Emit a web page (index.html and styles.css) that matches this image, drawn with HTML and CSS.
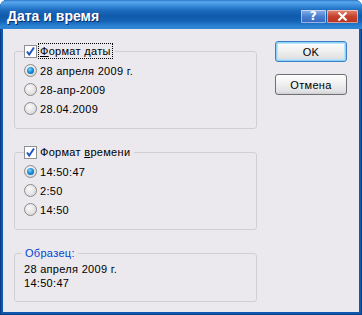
FILE: index.html
```html
<!DOCTYPE html>
<html>
<head>
<meta charset="utf-8">
<link rel="stylesheet" href="styles.css">
</head>
<body>
<div class="window">
  <div class="titlebar">
    <span class="title">Дата и время</span>
    <div class="tb-buttons">
      <div class="tb help">?</div>
      <div class="tb close">
        <svg width="11" height="9" viewBox="0 0 11 9"><path d="M1.5 0.5 L9.5 8.5 M9.5 0.5 L1.5 8.5" stroke="#fff" stroke-width="2.2" fill="none"/></svg>
      </div>
    </div>
  </div>
  <div class="client">
    <div class="left">
      <div class="group">
        <div class="legend">
          <span class="check"><svg width="13" height="13" viewBox="0 0 13 13"><rect x="0.5" y="0.5" width="12" height="12" fill="#fff" stroke="#8e8f8f"/><path d="M3 6.5 L5.2 9.5 L10 2.5" stroke="#2156c6" stroke-width="2" fill="none"/></svg></span>
          <span class="focus"><u>Ф</u>ормат даты</span>
        </div>
        <div class="rows">
          <div class="row"><span class="radio on"></span>28 апреля 2009 г.</div>
          <div class="row"><span class="radio"></span>28-апр-2009</div>
          <div class="row"><span class="radio"></span>28.04.2009</div>
        </div>
      </div>
      <div class="group g2">
        <div class="legend">
          <span class="check"><svg width="13" height="13" viewBox="0 0 13 13"><rect x="0.5" y="0.5" width="12" height="12" fill="#fff" stroke="#8e8f8f"/><path d="M3 6.5 L5.2 9.5 L10 2.5" stroke="#2156c6" stroke-width="2" fill="none"/></svg></span>
          <span class="lbl">Формат <u>в</u>ремени</span>
        </div>
        <div class="rows">
          <div class="row"><span class="radio on"></span>14:50:47</div>
          <div class="row"><span class="radio"></span>2:50</div>
          <div class="row"><span class="radio"></span>14:50</div>
        </div>
      </div>
      <div class="group g3">
        <div class="legend blue"><span class="lbl">Образец:</span></div>
        <div class="sample">
          <div>28 апреля 2009 г.</div>
          <div>14:50:47</div>
        </div>
      </div>
    </div>
    <div class="right">
      <div class="btn default">OK</div>
      <div class="btn">Отмена</div>
    </div>
  </div>
</div>
</body>
</html>
```
FILE: styles.css
```css
* { box-sizing: border-box; }
html, body { margin: 0; padding: 0; }
body {
  width: 362px;
  height: 315px;
  overflow: hidden;
  font-family: "Liberation Sans", Arial, sans-serif;
  font-size: 11px;
  letter-spacing: 0.3px;
  color: #000;
}
.window {
  width: 362px;
  height: 315px;
  display: flex;
  flex-direction: column;
  background: #1057b0;
  border-radius: 7px 7px 0 0;
  overflow: hidden;
  box-shadow: inset 1px 0 0 #0a3f86, inset -1px 0 0 #0a3f86, inset 0 -1px 0 #0a3f86;
}
.titlebar {
  height: 29px;
  flex: none;
  display: flex;
  align-items: center;
  padding: 2px 7px 0 7px;
  background: linear-gradient(to bottom, #2a78cc 0px, #5aa8ea 2px, #3f92df 5px, #1e6dc0 10px, #105aab 16px, #1462b5 21px, #2a82d2 26px, #2d85d4 29px);
}
.title {
  flex: 1;
  color: #fff;
  font-family: "Liberation Sans", sans-serif;
  font-weight: bold;
  font-size: 14px;
  letter-spacing: 0;
  text-shadow: 1px 1px 0 #0b2f6a;
}
.tb-buttons {
  display: flex;
  gap: 1px;
  margin-right: -3px;
  margin-top: 1px;
}
.tb {
  height: 13px;
  display: flex;
  align-items: center;
  justify-content: center;
  color: #fff;
  font-weight: bold;
  font-size: 12px;
  border-radius: 1px;
  box-shadow: inset 0 0 0 1px rgba(255,255,255,0.5);
}
.help {
  width: 25px;
  background: linear-gradient(to bottom, #8cb2e6, #4a7fd0 50%, #3466c0);
  font-family: "DejaVu Sans", sans-serif;
}
.close {
  width: 31px;
  background: linear-gradient(to bottom, #e28a74, #c7402b 50%, #b53523);
}
.client {
  flex: 1;
  margin: 0 3px 3px 3px;
  background: #ebe9ed;
  display: flex;
  align-items: flex-start;
  padding: 0 0 0 11px;
}
.left {
  width: 243px;
  flex: none;
  padding-top: 22px;
}
.group {
  border: 1px solid #d0d0d3;
  border-radius: 3px;
  padding: 0 0 10px 9px;
}
.g2 { margin-top: 23px; padding-bottom: 10px; }
.g3 { margin-top: 23px; padding-bottom: 11px; }
.legend {
  display: flex;
  width: fit-content;
  align-items: center;
  height: 14px;
  margin-top: -8px;
  background: #ebe9ed;
  padding-right: 3px;
}
.legend.blue { color: #0046d5; margin-left: -2px; padding: 0 2px; }
.check { width: 13px; height: 13px; display: block; margin-right: 2px; }
.check svg { display: block; }
.focus { outline: 1px dotted #000; outline-offset: 0; padding: 0 1px; line-height: 14px; }
.lbl { padding: 0 1px; line-height: 14px; }
.rows { margin-top: 3px; }
.g2 .rows { margin-top: 3px; }
.row {
  height: 19px;
  display: flex;
  align-items: center;
}
.radio {
  width: 13px;
  height: 13px;
  border-radius: 50%;
  margin-right: 3px;
  border: 1px solid #8a8b8c;
  background: radial-gradient(circle at 40% 35%, #fbfbfb 0%, #e4e4e4 55%, #cfcfcf 100%);
  position: relative;
}
.radio.on::after {
  content: "";
  position: absolute;
  left: 2px; top: 2px;
  width: 7px; height: 7px;
  border-radius: 50%;
  background: radial-gradient(circle at 40% 35%, #7fd7ff 0%, #1e8fd6 45%, #0a4f9c 100%);
}
.sample {
  padding-top: 2px;
  line-height: 14px;
}
.right {
  margin-left: 18px;
  padding-top: 12px;
  display: flex;
  flex-direction: column;
  gap: 12px;
}
.btn {
  width: 72px;
  height: 21px;
  display: flex;
  align-items: center;
  justify-content: center;
  border: 1px solid #6f7073;
  border-radius: 3px;
  background: linear-gradient(to bottom, #fefefe 0%, #f2f2f2 40%, #e2e2e4 85%, #cfd0d2 100%);
}
.btn.default {
  border-color: #3d7fc8;
  box-shadow: inset 0 0 0 1px #8fd0f7, inset 0 0 0 2px #b8e4fb;
}
```
